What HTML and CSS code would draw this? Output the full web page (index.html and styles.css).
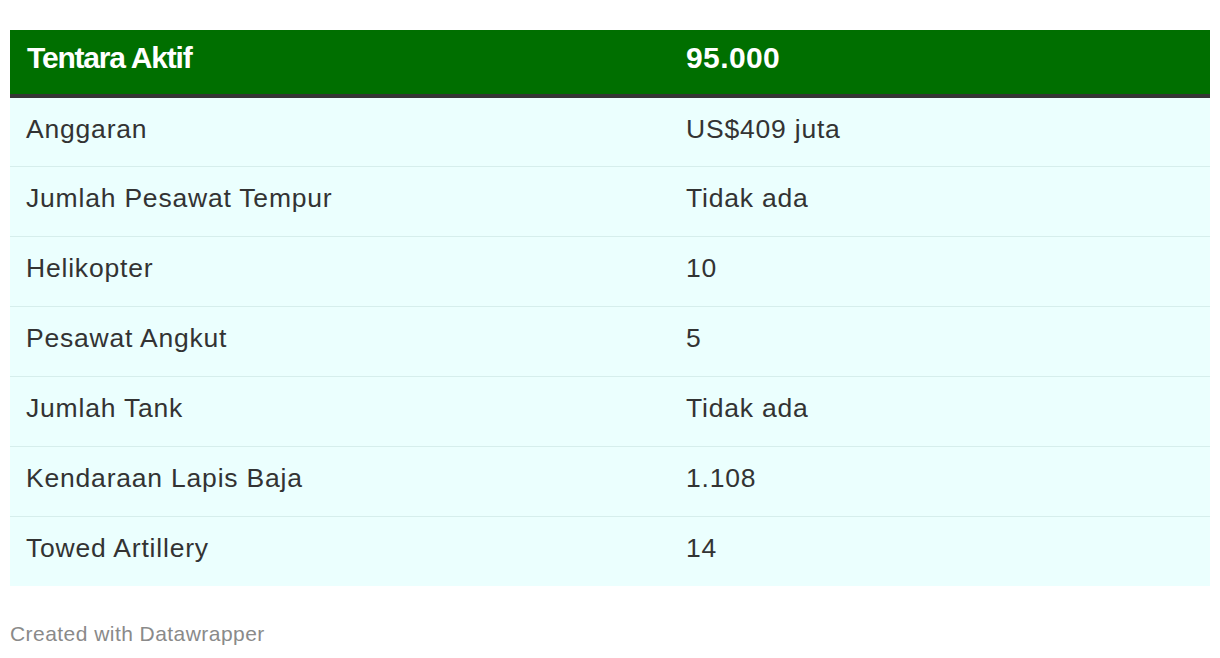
FILE: index.html
```html
<!DOCTYPE html>
<html>
<head>
<meta charset="utf-8">
<link rel="stylesheet" href="styles.css">
</head>
<body>
<div class="chart">
  <table class="dw-table">
    <thead>
      <tr class="head-row">
        <th class="col-a">Tentara Aktif</th>
        <th class="col-b">95.000</th>
      </tr>
    </thead>
    <tbody>
      <tr><td class="col-a">Anggaran</td><td class="col-b">US$409 juta</td></tr>
      <tr><td class="col-a">Jumlah Pesawat Tempur</td><td class="col-b">Tidak ada</td></tr>
      <tr><td class="col-a">Helikopter</td><td class="col-b">10</td></tr>
      <tr><td class="col-a">Pesawat Angkut</td><td class="col-b">5</td></tr>
      <tr><td class="col-a">Jumlah Tank</td><td class="col-b">Tidak ada</td></tr>
      <tr><td class="col-a">Kendaraan Lapis Baja</td><td class="col-b">1.108</td></tr>
      <tr><td class="col-a">Towed Artillery</td><td class="col-b">14</td></tr>
    </tbody>
  </table>
  <div class="footer">Created with Datawrapper</div>
</div>
</body>
</html>
```

FILE: styles.css
```css
html, body {
  margin: 0;
  padding: 0;
  background: #ffffff;
}
.chart {
  padding: 30px 10px 0 10px;
  font-family: "Liberation Sans", Arial, Helvetica, sans-serif;
}
.dw-table {
  width: 1200px;
  border-collapse: separate;
  border-spacing: 0;
  table-layout: fixed;
}
.col-a {
  width: 660px;
}
.head-row th {
  background: #006f00;
  color: #ffffff;
  font-weight: bold;
  font-size: 30px;
  text-align: left;
  height: 68px;
  padding: 0 16px 8px 17px;
  box-sizing: border-box;
  border-bottom: 4px solid #353535;
  vertical-align: middle;
}
.head-row th.col-a {
  letter-spacing: -1.2px;
}
.head-row th.col-b {
  letter-spacing: 0.4px;
  padding-left: 16px;
}
.dw-table td {
  background: #ebfffe;
  color: #333333;
  font-size: 26.5px;
  letter-spacing: 0.8px;
  height: 70px;
  box-sizing: border-box;
  padding: 0 16px 6px 16px;
  border-bottom: 1px solid #d6eeec;
  vertical-align: middle;
}
.dw-table tbody tr:first-child td {
  height: 69px;
}
.dw-table tbody tr:last-child td {
  border-bottom: none;
  height: 69px;
}
.footer {
  margin-top: 36px;
  font-size: 21px;
  letter-spacing: 0.45px;
  color: #8a8a8a;
}
```
